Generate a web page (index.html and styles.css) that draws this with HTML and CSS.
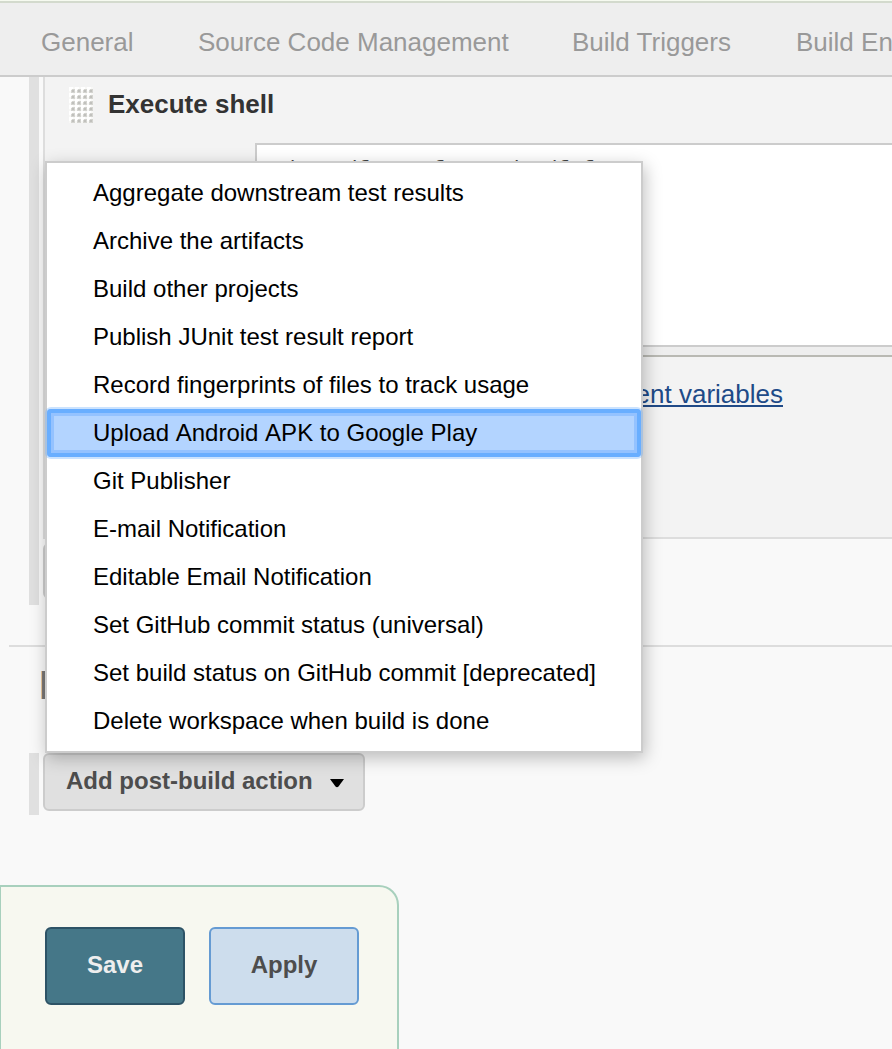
FILE: index.html
```html
<!DOCTYPE html>
<html lang="en">
<head>
<meta charset="utf-8">
<title>Job configuration</title>
<link rel="stylesheet" href="styles.css">
</head>
<body>
<nav class="tabs"><span class="t1">General</span><span class="t2">Source Code Management</span><span class="t3">Build Triggers</span><span class="t4">Build Environment</span></nav>
<main class="config">
  <section class="builders">
    <div class="rail"></div>
    <div class="builder-list">
      <div class="step">
        <header class="step-head">
          <svg class="grip" width="24" height="36" viewBox="0 0 24 36">
            <defs><pattern id="dot" width="6" height="6" patternUnits="userSpaceOnUse"><rect width="6" height="6" fill="#f8f8f6"/><path d="M0 0h4v2H2v2H0z" fill="#fff"/><path d="M3 2h3v4H2V3h1z" fill="#d4d4d0"/><path d="M3 3h2v2H3z" fill="#c0c0bc"/></pattern></defs>
            <rect width="24" height="36" fill="url(#dot)"/>
          </svg>
          <h2 class="step-title">Execute shell</h2>
        </header>
        <div class="editor"><code class="command">./nomadf run from_ dev/f.f</code></div>
        <div class="resizer"></div>
        <p class="help"><a class="link">See the list of available environment variables</a></p>
      </div>
      <div class="add-step"></div>
    </div>
  </section>
  <section class="post">
    <h2 class="section-title">Post-build Actions</h2>
    <div class="post-row">
      <div class="rail"></div>
      <div class="anchor">
        <button class="add-action"><span>Add post-build action</span><svg class="caret" width="14" height="9" viewBox="0 0 14 9"><path d="M0 0H14L8.5 7.5Q7 9 5.5 7.5Z"/></svg></button>
        <ul class="menu">
          <li>Aggregate downstream test results</li>
          <li>Archive the artifacts</li>
          <li>Build other projects</li>
          <li>Publish JUnit test result report</li>
          <li>Record fingerprints of files to track usage</li>
          <li class="selected">Upload Android APK to Google Play</li>
          <li>Git Publisher</li>
          <li>E-mail Notification</li>
          <li>Editable Email Notification</li>
          <li>Set GitHub commit status (universal)</li>
          <li>Set build status on GitHub commit [deprecated]</li>
          <li>Delete workspace when build is done</li>
        </ul>
      </div>
    </div>
  </section>
</main>
<footer class="actions"><button class="save">Save</button><button class="apply">Apply</button></footer>
</body>
</html>
```

FILE: styles.css
```css
* { box-sizing: border-box; }
body {
  margin: 0;
  width: 892px;
  height: 1049px;
  overflow: hidden;
  display: flex;
  flex-direction: column;
  background: #f9f9f9;
  font: 24px/28px "Liberation Sans", Arial, sans-serif;
  color: #333;
  border-top: 1px solid #f6faf0;
}
.tabs {
  height: 76px;
  flex: none;
  display: flex;
  padding: 25px 0 0 41px;
  border-top: 2px solid #d3dacd;
  border-bottom: 2px solid #ccc;
  background: #eee;
  color: #999;
  font-size: 26px;
  white-space: nowrap;
  overflow: hidden;
}
.tabs span { flex: none; }
.t1 { width: 157px; }
.t2 { width: 374px; }
.t3 { width: 224px; }
.config { height: 808px; flex: none; }
.builders {
  height: 568px;
  margin-left: 9px;
  padding-left: 20px;
  display: flex;
  gap: 4px;
}
.rail { width: 10px; flex: none; background: #e0e0e0; }
.builders .rail { height: 528px; }
.builder-list { flex: 1; }
.step {
  height: 462px;
  border-left: 2px solid #ddd;
  border-bottom: 2px solid #ddd;
  background: #f3f3f3;
}
.step-head {
  display: flex;
  gap: 15px;
  height: 66px;
  padding: 10px 0 0 24px;
}
.grip { flex: none; }
.step-title { margin: 3px 0 0; font-size: 26px; line-height: 28px; }
.editor {
  height: 204px;
  margin-left: 210px;
  border: 2px solid #ccc;
  border-right: 0;
  background: #fff;
  padding: 11px 0 0 13px;
}
.command { display: block; color: #444; font: 20.8px/28px "Liberation Mono", monospace; }
.resizer {
  height: 10px;
  margin-left: 210px;
  background: #eee;
  border-bottom: 2px solid #b9b9b3;
}
.help { display: flex; justify-content: flex-end; margin: 23px 109px 0 0; font-size: 26px; white-space: nowrap; }
.link { color: #204a87; text-decoration: underline; text-decoration-thickness: 2px; text-underline-offset: 2px; }
.add-step { width: 280px; height: 56px; margin-top: 4px; border: 2px solid #ccc; border-radius: 6px; background: #e0e0e0; }
.post {
  height: 240px;
  margin-left: 9px;
  border-top: 2px solid #ddd;
}
.section-title { height: 106px; margin: 0; padding: 24px 0 0 30px; font-size: 40px; line-height: 28px; color: #777; }
.post-row { display: flex; gap: 4px; margin-left: 20px; height: 62px; }
.anchor { position: relative; }
.add-action {
  display: flex;
  align-items: center;
  gap: 17px;
  width: 322px;
  height: 58px;
  padding: 0 0 2px 21px;
  border: 2px solid #ccc;
  border-radius: 6px;
  background: #e0e0e0;
  color: #4d4d4d;
  font: bold 24px/28px "Liberation Sans", Arial, sans-serif;
  white-space: nowrap;
}
.caret { margin-top: 4px; }
.menu {
  position: absolute;
  left: 2px;
  bottom: 62px;
  width: 598px;
  height: 592px;
  margin: 0;
  padding: 6px 0;
  border: 2px solid #ccc;
  background: #fff;
  box-shadow: 2px 5px 16px rgba(0,0,0,.25);
  color: #000;
  list-style: none;
  white-space: nowrap;
}
.menu li { height: 48px; padding: 10px 0 0 46px; }
.menu .selected {
  position: relative;
  background: #b3d4ff;
  border-radius: 4px;
  font-kerning: none;
  box-shadow: 0 0 0 2px rgba(105,174,255,.35), inset 0 0 0 4px #69aeff, inset 0 0 0 7px #94c2ff;
}
.actions {
  width: 399px;
  height: 180px;
  flex: none;
  display: flex;
  gap: 24px;
  padding: 40px 0 0 44px;
  border: 2px solid #a8d0bd;
  border-left-width: 1px;
  border-radius: 0 20px 0 0;
  background: #f7f8f0;
}
.actions button { height: 78px; padding: 0 0 2px; border: 2px solid; border-radius: 6px; font: bold 24px/28px "Liberation Sans", Arial, sans-serif; }
.actions .save { width: 140px; color: #eee; background: #457788; border-color: #2d5366; }
.actions .apply { width: 150px; color: #4d4d4d; background: #cddded; border-color: #659bd3; }
```
